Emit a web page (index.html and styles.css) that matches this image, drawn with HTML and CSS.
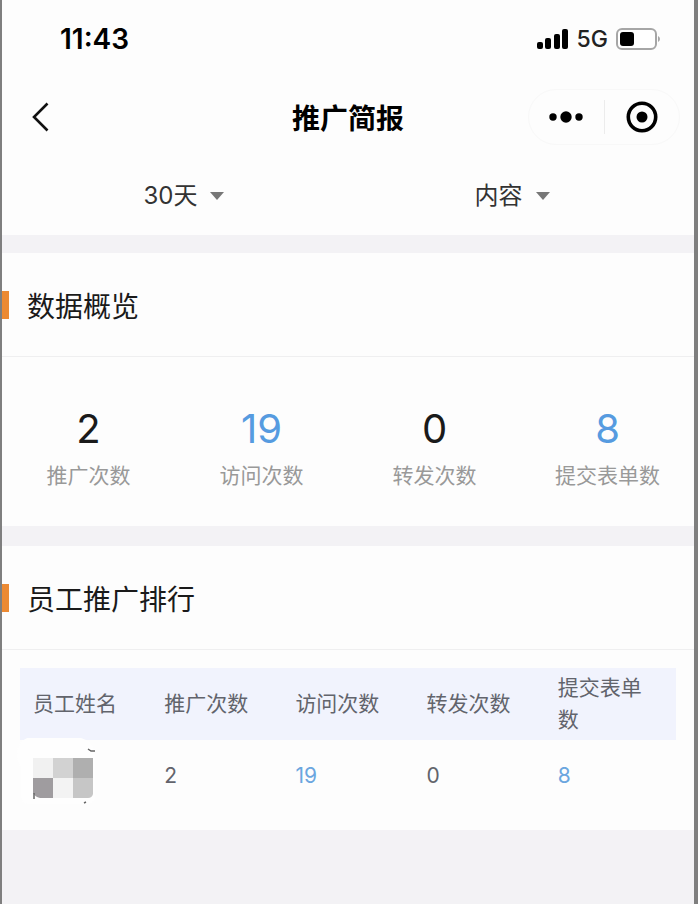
FILE: index.html
```
<!DOCTYPE html>
<html lang="zh-CN">
<head>
    <meta charset="UTF-8">
    <meta name="viewport" content="width=device-width, initial-scale=1.0">
    <title>推广简报</title>
    <link rel="stylesheet" href="styles.css">
</head>
<body>
    <div class="status-bar">
        <span class="time">11:43</span>
        <div class="status-icons">
            <svg width="32" height="20" viewBox="0 0 32 20">
                <rect x="0" y="13" width="6" height="7" rx="2"/>
                <rect x="8" y="9" width="6" height="11" rx="2"/>
                <rect x="17" y="5" width="6" height="15" rx="2"/>
                <rect x="25" y="0" width="6" height="20" rx="2"/>
            </svg>
            <span class="network">5G</span>
            <svg width="46" height="22" viewBox="0 0 46 22">
                <rect x="1" y="1" width="39" height="20" rx="5" fill="#fff" stroke="#a6a6a6" stroke-width="2"/>
                <rect x="4" y="4" width="14" height="14" rx="3"/>
                <path d="M42 8q2 1 2 3t-2 3z" fill="#a6a6a6"/>
            </svg>
        </div>
    </div>

    <header class="nav-bar">
        <button class="icon-button back" aria-label="返回">
            <svg width="18" height="30" viewBox="0 0 18 30">
                <path d="M15.500 1.500 2 15l13.500 13.500" fill="none" stroke="#111" stroke-width="2.600"/>
            </svg>
        </button>
        <h1>推广简报</h1>
        <div class="capsule">
            <button class="icon-button" aria-label="更多">
                <svg width="34" height="12" viewBox="0 0 34 12">
                    <circle cx="4" cy="6" r="3.700"/>
                    <circle cx="17" cy="6" r="5.700"/>
                    <circle cx="30" cy="6" r="3.700"/>
                </svg>
            </button>
            <button class="icon-button" aria-label="关闭">
                <svg width="32" height="32" viewBox="0 0 32 32">
                    <circle cx="16" cy="16" r="13.700" fill="none" stroke="#000" stroke-width="3.600"/>
                    <circle cx="16" cy="16" r="5.500"/>
                </svg>
            </button>
        </div>
    </header>

    <div class="filters">
        <label class="filter">
            <select name="period" aria-label="时间">
                <option>30天</option>
            </select>
            <svg width="14" height="8" viewBox="0 0 14 8"><path d="M0 0h14L7 8z"/></svg>
        </label>
        <label class="filter">
            <select name="type" aria-label="类型">
                <option>内容</option>
            </select>
            <svg width="14" height="8" viewBox="0 0 14 8"><path d="M0 0h14L7 8z"/></svg>
        </label>
    </div>

    <section class="panel">
        <h2>数据概览</h2>
        <div class="stats">
            <div class="stat">
                <strong>2</strong>
                <span>推广次数</span>
            </div>
            <div class="stat">
                <strong class="blue">19</strong>
                <span>访问次数</span>
            </div>
            <div class="stat">
                <strong>0</strong>
                <span>转发次数</span>
            </div>
            <div class="stat">
                <strong class="blue">8</strong>
                <span>提交表单数</span>
            </div>
        </div>
    </section>

    <section class="panel">
        <h2>员工推广排行</h2>
        <div class="ranking">
            <table>
                <thead>
                    <tr>
                        <th>员工姓名</th>
                        <th>推广次数</th>
                        <th>访问次数</th>
                        <th>转发次数</th>
                        <th>提交表单数</th>
                    </tr>
                </thead>
                <tbody>
                    <tr>
                        <td>
                            <!-- masked name -->
                            <svg class="mask" width="60" height="40" viewBox="0 0 60 40">
                                <path d="M-6-20h54q14 4 14 16v44q-2 6-10 6H-4q-8 0-8-8V10q-4-6-4-14 0-12 10-16z" fill="#fefefe"/>
                                <path d="M0 0h20v20H0z" fill="#f1f1f1"/>
                                <path d="M20 0h20v20H20z" fill="#d2d2d2"/>
                                <path d="M40 0h20v20H40z" fill="#afafaf"/>
                                <path d="M0 20h20v20H7q-5-1-7-5z" fill="#9f9c9f"/>
                                <path d="M20 20h20v20H20z" fill="#f3f3f3"/>
                                <path d="M40 20h20v16q-1 4-5 4H40z" fill="#c6c6c6"/>
                                <path d="M55-9l3 2h4M1 35v6M53 44l-2 1" fill="none" stroke="#666" stroke-width="1.500"/>
                            </svg>
                        </td>
                        <td>2</td>
                        <td class="blue">19</td>
                        <td>0</td>
                        <td class="blue">8</td>
                    </tr>
                </tbody>
            </table>
        </div>
    </section>
</body>
</html>
```

FILE: styles.css
```
* {
    box-sizing: border-box;
}
html {
    background-color: #f3f2f5;
}
body {
    margin: 0;
    min-height: 100vh;
    border-left: 2px solid #7f7f7f;
    border-right: 4px solid #7f7f7f;
    font-family: Inter, "Noto Sans CJK SC", sans-serif;
    color: #1a1a1a;
}
h1, h2 {
    margin: 0;
}
svg {
    display: block;
}
.status-bar, .nav-bar, .filters, .panel {
    background-color: #fdfdfd;
}
.status-bar {
    display: flex;
    justify-content: space-between;
    align-items: center;
    height: 78px;
    padding: 0 32px 0 58px;
    color: #000;
}
.time {
    font-size: 28px;
    font-weight: 600;
}
.status-icons {
    display: flex;
    align-items: center;
    gap: 8px;
}
.network {
    font-size: 23px;
    font-weight: 500;
    color: #222;
}
.nav-bar {
    display: grid;
    grid-template-columns: 1fr auto 1fr;
    align-items: center;
    height: 78px;
    padding: 0 14px 0 30px;
}
.nav-bar h1 {
    padding-right: 16px;
    font-size: 28px;
    font-weight: 600;
    color: #000;
}
.icon-button {
    display: flex;
    align-items: center;
    justify-content: center;
    padding: 0;
    border: 0;
    background: none;
}
.back {
    justify-self: start;
}
.capsule {
    display: flex;
    align-items: center;
    justify-self: end;
    width: 152px;
    height: 56px;
    border: 1px solid #f8f8f8;
    border-radius: 28px;
}
.capsule .icon-button {
    flex: 1;
    height: 34px;
}
.capsule .icon-button + .icon-button {
    border-left: 1px solid #ececec;
}
.filters {
    display: flex;
    height: 79px;
    padding: 0 18px;
}
.filter {
    display: flex;
    flex: 1;
    align-items: center;
    justify-content: center;
    gap: 13px;
}
.filter select {
    appearance: none;
    field-sizing: content;
    padding: 0;
    border: 0;
    background: none;
    font-family: inherit;
    font-size: 24px;
    line-height: 36px;
    color: #333;
}
.filter svg {
    fill: #777;
}
.panel {
    margin-top: 18px;
}
.panel + .panel {
    margin-top: 20px;
}
.panel h2 {
    display: flex;
    align-items: center;
    gap: 18px;
    height: 104px;
    border-bottom: 1px solid #efeff0;
    font-size: 28px;
    font-weight: 400;
}
.panel h2::before {
    content: "";
    width: 7px;
    height: 28px;
    background-color: #ec8a33;
}
.stats {
    display: grid;
    grid-template-columns: repeat(4, 1fr);
    padding: 48px 0 34px;
}
.stat {
    display: flex;
    flex-direction: column;
    align-items: center;
}
.stat strong {
    font-size: 40px;
    font-weight: 400;
    line-height: 48px;
}
.stat span {
    margin-top: 7px;
    font-size: 21px;
    line-height: 32px;
    color: #999;
}
.ranking {
    padding: 18px;
}
.ranking table {
    width: 100%;
    table-layout: fixed;
    border-collapse: collapse;
}
.ranking th, .ranking td {
    height: 72px;
    padding: 4px 16px 4px 13px;
    font-size: 21px;
    font-weight: 400;
    line-height: 32px;
    text-align: left;
    color: #62646c;
}
.ranking thead {
    background-color: #f1f3fd;
}
.mask {
    margin-top: 4px;
    overflow: visible;
}
.stat .blue {
    color: #569be0;
}
.ranking .blue {
    color: #6ba6df;
}
```
